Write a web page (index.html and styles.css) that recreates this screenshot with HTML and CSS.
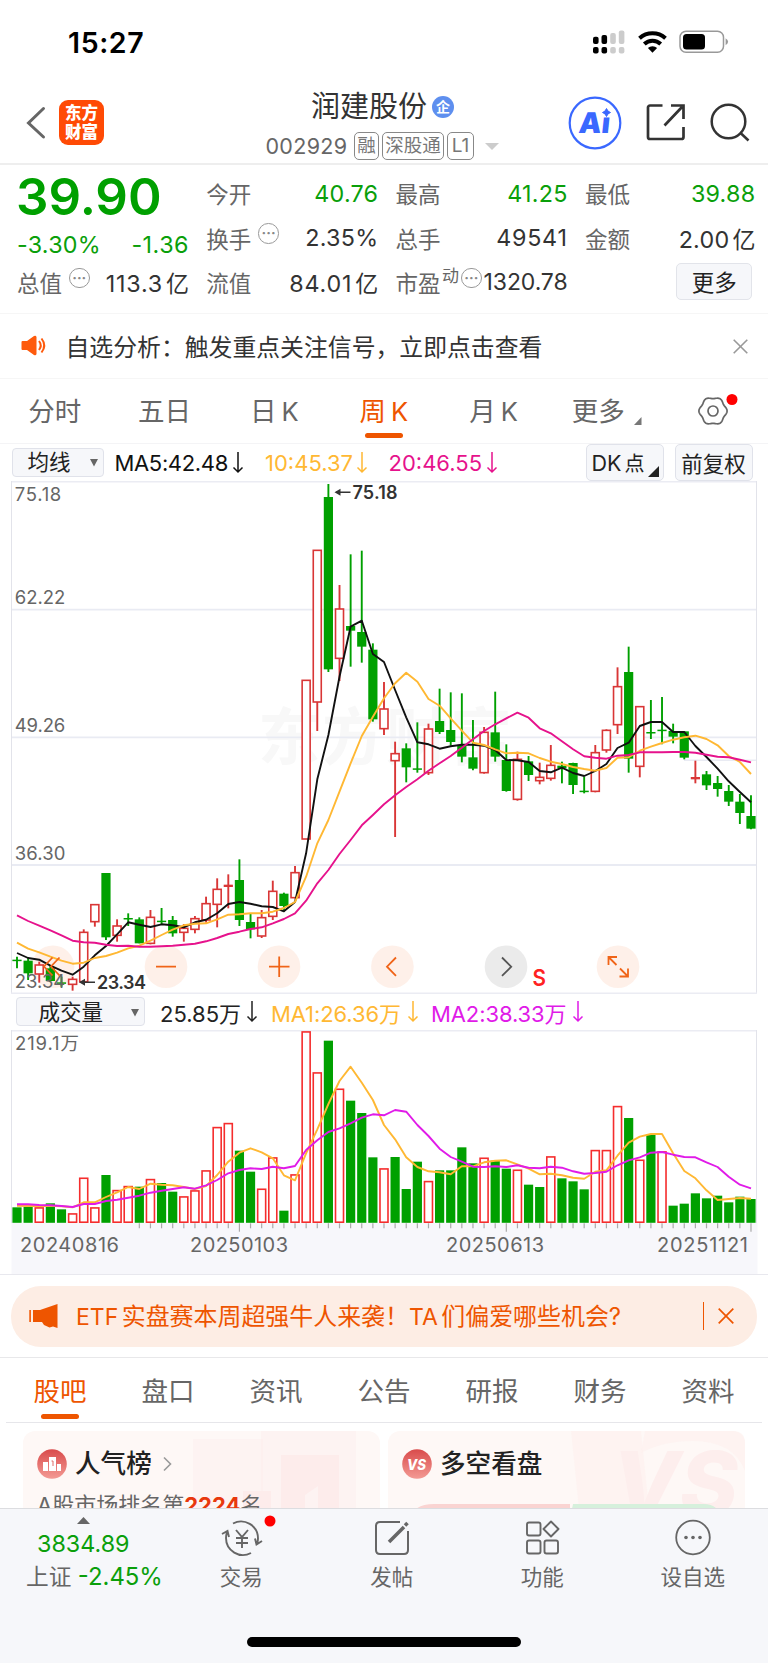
FILE: index.html
```html
<!DOCTYPE html>
<html lang="zh-CN">
<head>
<meta charset="utf-8">
<title>润建股份 002929</title>
<link rel="stylesheet" href="styles.css">
</head>
<body>
<div class="app">
  <div class="status">
    <span class="time">15:27</span>
    <svg class="status-icons" width="140" height="26" viewBox="590 28 140 26">
      <g fill="#000"><rect x="593" y="36.700" width="5.600" height="7.300" rx="2"/><rect x="601.500" y="35" width="5.600" height="9" rx="2"/><rect x="593" y="47" width="5.600" height="6.500" rx="2"/><rect x="601.500" y="47" width="5.600" height="6.500" rx="2"/></g>
      <g fill="#ccc"><rect x="610.200" y="33" width="5.600" height="11" rx="2"/><rect x="618.800" y="30.500" width="5.600" height="13.500" rx="2"/><rect x="610.200" y="47" width="5.600" height="6.500" rx="2"/><rect x="618.800" y="47" width="5.600" height="6.500" rx="2"/></g>
      <g fill="none" stroke="#000" stroke-width="4"><path d="M639.500 38.300a19.500 19.500 0 0 1 26 0"/><path d="M644.300 44a12 12 0 0 1 16.400 0"/></g>
      <path d="M652.500 52.800l-4.600-4.700a6.600 6.600 0 0 1 9.200 0z"/>
      <rect x="680" y="31.200" width="43.500" height="21" rx="6" fill="#fff" stroke="#999" stroke-width="1.500"/>
      <rect x="683" y="34" width="22" height="15.500" rx="3.500"/><path d="M725.600 38.200q5 3.500 0 7z" fill="#999"/>
    </svg>
  </div>

  <header class="head">
    <svg class="back" width="20" height="34" viewBox="0 0 20 34"><path d="M17.500 2.500L2.500 17l15 14" fill="none" stroke="#666" stroke-width="3" stroke-linecap="round"/></svg>
    <div class="logo"><span>东方</span><span>财富</span></div>
    <div class="title">
      <div class="name">润建股份<i class="qi">企</i></div>
      <div class="code"><span class="num">002929</span><span class="tag t1">融</span><span class="tag t3">深股通</span><span class="tag t2">L1</span><i class="caret"></i></div>
    </div>
    <svg class="ai" width="54" height="54" viewBox="0 0 54 54"><circle cx="27" cy="27" r="25.300" fill="#fff" stroke="#3a68ff" stroke-width="2.200"/><text x="14" y="37.300" class="ai-text" transform="skewX(-6)">Ai</text><path d="M32 10h11v10.500H32z" fill="#fff"/><path d="M38.500 12.500q1 3.200 4 4-3 .8-4 4-1-3.200-4-4 3-.8 4-4z" fill="#3a68ff" stroke="#3a68ff"/></svg>
    <svg class="share" width="40" height="40" viewBox="0 0 40 40" fill="none" stroke="#333" stroke-width="2.700"><path d="M16.500 2.500H4a2 2 0 0 0-2 2V34a2 2 0 0 0 2 2h31.500a2 2 0 0 0 2-2V24M18.500 22.500L36 4M25 2.500h12.500V16"/></svg>
    <svg class="search" width="40" height="40" viewBox="0 0 40 40" fill="none" stroke="#333" stroke-width="2.500"><circle cx="18.500" cy="18.500" r="16.800"/><path d="M30 29.500l8.500 8"/></svg>
  </header>

  <section class="quote">
    <div class="col first">
      <div class="price">39.90</div>
      <div class="cell chg"><b class="g">-3.30%</b><b class="g">-1.36</b></div>
      <div class="cell r3"><span>总值</span><i class="dots">···</i><b>113.3<em>亿</em></b></div>
    </div>
    <div class="col">
      <div class="cell"><span>今开</span><b class="g">40.76</b></div>
      <div class="cell"><span>换手</span><i class="dots">···</i><b>2.35%</b></div>
      <div class="cell r3"><span>流值</span><b>84.01<em>亿</em></b></div>
    </div>
    <div class="col">
      <div class="cell"><span>最高</span><b class="g">41.25</b></div>
      <div class="cell"><span>总手</span><b class="five">49541</b></div>
      <div class="cell pe"><span>市盈</span><sup>动</sup><i class="dots">···</i><b>1320.78</b></div>
    </div>
    <div class="col last">
      <div class="cell"><span>最低</span><b class="g">39.88</b></div>
      <div class="cell"><span>金额</span><b>2.00<em>亿</em></b></div>
      <div class="cell"><button class="more">更多</button></div>
    </div>
  </section>

  <section class="notice">
    <svg width="26" height="22" viewBox="0 0 26 22"><path d="M1.500 6h4.500L13 1q2-1 2.500 1v17q-.5 2-2.500 1L6 15H1.500Q.5 15 .5 14V7q0-1 1-1z" fill="#fe5a0c"/><path d="M18 6q3.500 4.500 0 9M20.500 3.500q5.500 7 0 14" fill="none" stroke="#fe5a0c" stroke-width="2"/></svg>
    <span class="msg">自选分析：触发重点关注信号，立即点击查看</span>
    <svg width="15" height="15" viewBox="0 0 15 15"><path d="M.7.7l13.600 13.600M14.300.7L.7 14.300" stroke="#999" stroke-width="1.600"/></svg>
  </section>

  <nav class="ktabs">
    <span>分时</span><span>五日</span><span class="k">日<i>K</i></span><span class="k on">周<i>K</i></span><span class="k">月<i>K</i></span><span class="mo">更多<svg width="8" height="8"><path d="M7.500 0v8H0z" fill="#777"/></svg></span>
    <span class="gear"><svg width="40" height="34" viewBox="692 394 40 34"><path id="gear" fill="none" stroke="#666" stroke-width="1.700"/><circle cx="713" cy="411" r="5" fill="none" stroke="#666" stroke-width="1.700"/><circle cx="732" cy="399.500" r="5.500" fill="#f00"/></svg></span>
  </nav>

  <div class="ind ma">
    <span class="sel s1">均线<svg width="8" height="8"><path d="M0 0h8L4 7.500z" fill="#666"/></svg></span>
    <span class="v" id="ma5">MA5:42.48<svg class="dn" viewBox="0 0 10 21"><path d="M5 0v20M.5 15.500L5 20l4.500-4.500"/></svg></span>
    <span class="v" id="ma10">10:45.37<svg class="dn" viewBox="0 0 10 21"><path d="M5 0v20M.5 15.500L5 20l4.500-4.500"/></svg></span>
    <span class="v" id="ma20">20:46.55<svg class="dn" viewBox="0 0 10 21"><path d="M5 0v20M.5 15.500L5 20l4.500-4.500"/></svg></span>
    <span class="btn dk">DK<i>点</i><svg width="11" height="11"><path d="M11 0v11H0z" fill="#222"/></svg></span>
    <span class="btn fq">前复权</span>
  </div>
  <svg class="kchart" id="kchart" width="768" height="513" viewBox="0 481 768 513"></svg>

  <div class="ind vol">
    <span class="sel s2">成交量<svg width="8" height="8"><path d="M0 0h8L4 7.500z" fill="#666"/></svg></span>
    <span class="v" id="v0">25.85万<svg class="dn" viewBox="0 0 10 21"><path d="M5 0v20M.5 15.500L5 20l4.500-4.500"/></svg></span>
    <span class="v" id="v1">MA1:26.36万<svg class="dn" viewBox="0 0 10 21"><path d="M5 0v20M.5 15.500L5 20l4.500-4.500"/></svg></span>
    <span class="v" id="v2">MA2:38.33万<svg class="dn" viewBox="0 0 10 21"><path d="M5 0v20M.5 15.500L5 20l4.500-4.500"/></svg></span>
  </div>
  <svg class="vchart" id="vchart" width="768" height="244" viewBox="0 1030 768 244"></svg>

  <section class="promo">
    <div class="pill">
      <svg width="30" height="26" viewBox="0 0 30 26" fill="#ee5500"><path d="M.3 7h1.600v12H.3zM4 7h7L28.500 1v24L24 23.500l-3.500 1L15 22l-2-3H4z"/></svg>
      <span class="ptext"><i>ETF</i>实盘赛本周超强牛人来袭！<i>TA</i>们偏爱哪些机会?</span>
      <i class="bar"></i>
      <svg width="16" height="16" viewBox="0 0 16 16"><path d="M.7.7l14.600 14.600M15.300.7L.7 15.300" stroke="#ee5500" stroke-width="1.700"/></svg>
    </div>
  </section>

  <nav class="tabs"><span class="on">股吧</span><span>盘口</span><span>资讯</span><span>公告</span><span>研报</span><span>财务</span><span>资料</span></nav>

  <section class="cards">
    <div class="card">
      <svg class="art" width="357" height="78" viewBox="0 0 357 78"><g fill="#fdeceb"><path d="M170 8h70v60h-30v10h-40z" opacity=".35"/><path d="M238 0h95v78h-95z" opacity=".35"/><path d="M220 60h28v18h-28z"/><path d="M258 24h58v54h-21V55l-13 9v14h-24z"/></g></svg>
      <div class="ctitle"><svg width="30" height="30" viewBox="0 0 30 30"><circle cx="15" cy="15" r="14.800" fill="url(#rg)"/><path d="M6 13h5v9H6zM12 8h7v14h-7zM20 15h4v7h-4z" fill="#fff"/><path d="M14.500 12h1.500v5" fill="none" stroke="#e06a66"/></svg><b>人气榜</b><svg width="9" height="16" viewBox="0 0 9 16"><path d="M1 1.500l6.500 6.500L1 14.500" fill="none" stroke="#999" stroke-width="1.600"/></svg></div>
      <div class="rank">A股市场排名第<b>2224</b>名</div>
    </div>
    <div class="card">
      <svg class="art" width="357" height="78" viewBox="0 0 357 78"><path d="M183 0h70l8 78h-70z" fill="#fef0ef" opacity=".6"/><path d="M257 0h88q12 0 12 12v28q-12-30-52-30-30 0-52 12z" fill="#fef0ef" opacity=".6"/><text x="224" y="84" class="vsbg">VS</text><path d="M28 78q6-5 18-5h136v5z" fill="#fad4d2"/><path d="M185 73h131q8 0 13 5H184z" fill="#d6f0dc"/></svg>
      <div class="ctitle"><svg width="30" height="30" viewBox="0 0 30 30"><defs><linearGradient id="rg" x2="0" y2="1"><stop stop-color="#d94b4b"/><stop offset="1" stop-color="#f39a94"/></linearGradient></defs><circle cx="15" cy="15" r="14.800" fill="url(#rg)"/><text x="5" y="21" class="vs" textLength="19" lengthAdjust="spacingAndGlyphs">VS</text></svg><b>多空看盘</b></div>
    </div>
  </section>

  <footer class="dock">
    <div class="index"><svg width="13" height="7"><path d="M0 7h13L6.500 0z" fill="#666"/></svg><b>3834.89</b><div>上证 <em>-2.45%</em></div></div>
    <div class="item"><svg width="56" height="44" viewBox="213 1515 56 44" fill="none" stroke="#666" stroke-width="1.900"><path d="M233 1523.500a17 17 0 0 1 25 15c0 2-.4 3.500-1 5.500M262 1541l-5.500 3.500-1.500-6M251 1553a17 17 0 0 1-25-15c0-2 .4-4 1-6M222 1534l5.500-3 1.500 6M236 1530l6 7 6-7M242 1537v11M236 1538h12M236 1543h12"/><circle cx="270" cy="1521" r="5.500" fill="red" stroke="none"/></svg><span>交易</span></div>
    <div class="item"><svg width="44" height="44" viewBox="370 1515 44 44" fill="none" stroke="#666" stroke-width="2"><path d="M400 1522h-20q-4 0-4 4v24q0 4 4 4h24q4 0 4-4v-19"/><path d="M389 1542l15-15" stroke-width="3.600"/><path d="M405 1525.500l2.500-2.500" stroke-width="3.600"/></svg><span>发帖</span></div>
    <div class="item"><svg width="44" height="44" viewBox="520 1515 44 44" fill="none" stroke="#666" stroke-width="1.900"><rect x="527" y="1522.500" width="13.500" height="13" rx="2"/><rect x="527" y="1540.500" width="13.500" height="13" rx="2"/><rect x="544.500" y="1540.500" width="13.500" height="13" rx="2"/><path d="M551 1521.500l7.500 7.500-7.500 7.500-7.500-7.500z" stroke-linejoin="round"/></svg><span>功能</span></div>
    <div class="item"><svg width="44" height="44" viewBox="671 1515 44 44"><circle cx="693" cy="1537.500" r="16.800" fill="none" stroke="#666" stroke-width="1.800"/><g fill="#666"><circle cx="686" cy="1537.500" r="1.800"/><circle cx="693" cy="1537.500" r="1.800"/><circle cx="700" cy="1537.500" r="1.800"/></g></svg><span>设自选</span></div>
    <i class="home"></i>
  </footer>
</div>
<script src="chart.js"></script>
</body>
</html>
```
FILE: styles.css
```css
* { box-sizing: border-box; }
body { margin: 0; background: #fff; color: #333; font-family: Inter, "Noto Sans CJK SC", sans-serif; }
i, em { font-style: normal; }
b { font-weight: 400; }
svg { display: block; flex: none; overflow: visible; }
.app { width: 768px; height: 1663px; overflow: hidden; display: flex; flex-direction: column; }
.app > * { flex: none; }

.status { height: 84px; display: flex; justify-content: space-between; padding: 28px 38px 0 68px; }
.time { font-size: 28.500px; font-weight: 600; line-height: 29px; color: #000; letter-spacing: .6px; }

.head { height: 81px; border-bottom: 2px solid #eee; display: flex; align-items: flex-start; padding: 1px 0 0 26px; }
.back { margin-top: 21px; }
.logo { width: 45px; height: 45px; margin: 15px 0 0 13px; border-radius: 9px; background: #ff4a05; color: #fff; font-size: 16.500px; font-weight: 900; line-height: 18.500px; display: flex; flex-direction: column; align-items: center; justify-content: center; }
.title { width: 371px; margin-left: 93px; display: flex; flex-direction: column; align-items: center; }
.name { font-size: 29px; line-height: 40px; height: 40px; margin-top: 2px; display: flex; align-items: center; padding-left: 26px; margin-left: -26px; }
.qi { width: 22px; height: 22px; border-radius: 11px; background: #5e8fef; color: #fff; font-size: 14px; font-weight: 700; line-height: 21px; text-align: center; margin-left: 5px; }
.code { display: flex; align-items: center; height: 38px; margin-top: 0; color: #666; width: 234px; }
.num { font-size: 21.500px; letter-spacing: .3px; width: 88.500px; }
.tag { height: 28px; border: 1.500px solid #888; border-radius: 5px; font-size: 18.500px; line-height: 25px; text-align: center; margin-right: 3px; color: #777; }
.t1 { width: 25px; } .t3 { width: 62px; } .t2 { width: 27px; font-size: 19px; }
.caret { border: 7px solid transparent; border-top-color: #ccc; border-bottom: 0; margin-left: 8px; }
.ai { margin: 10.500px 0 0 0; }
.ai-text { font: 900 28.500px Inter, sans-serif; fill: #3a68ff; }
.share { margin: 18px 0 0 24px; }
.search { margin: 18px 0 0 24px; }

.quote { height: 149px; border-bottom: 1.500px solid #f6f6f6; padding: 6px 12px 0 17px; display: flex; gap: 17.300px; }
.col { width: 172px; }
.last { width: 170.500px; }
.cell { height: 44.500px; display: flex; align-items: center; font-size: 22.500px; color: #666; white-space: nowrap; }
.cell b { margin-left: auto; color: #333; font-size: 23.300px; letter-spacing: .25px; }
.cell.r3 b { letter-spacing: .8px; }
.cell .five { letter-spacing: .7px; }
.cell em { margin-left: 3px; font-size: 23px; letter-spacing: 0; }
.cell b.g, .g { color: #0a9f0a; }
.price { color: #00a000; font-size: 51px; line-height: 52px; font-weight: 600; height: 50px; margin-left: -1px; }
.chg { height: 39px; padding-top: 8px; }
.cell.chg b { margin-left: 0; } .cell.chg b + b { margin-left: auto; letter-spacing: .5px; }
.dots { width: 20.500px; height: 20.500px; border: 1.500px solid #999; border-radius: 50%; margin: -9px 0 0 7px; font-size: 14px; line-height: 17px; color: #888; font-weight: 700; display: flex; justify-content: center; }
.pe sup { font-size: 17px; line-height: 20px; margin: -12px 0 0 1.500px; } .pe .dots { margin-left: 2px; }
.cell.pe b { letter-spacing: -.1px; font-size: 23px; }
.more { width: 75.500px; height: 36.500px; border: 1.500px solid #e2e4ea; border-radius: 5px; background: #f6f7fa; font: 22.500px/30px "Noto Sans CJK SC", sans-serif; color: #222; padding: 0; margin: -2px 0 0 91.500px; }

.notice { height: 65px; border-bottom: 1.500px solid #f6f6f6; display: flex; align-items: center; padding: 0 20px 0 21px; }
.msg { flex: 1; font-size: 23.850px; margin: -2px 0 0 18.500px; white-space: nowrap; }

.ktabs { height: 65px; border-bottom: 1.500px solid #f4f4f6; display: flex; font-size: 26.500px; line-height: 65px; color: #666; }
.ktabs > span { width: 109.700px; flex: none; text-align: center; position: relative; }
.ktabs i { margin-left: 5px; font-size: 25.500px; }
.ktabs .on, .tabs .on { color: #ee5500; }
.ktabs .on::after, .tabs .on::after { content: ""; position: absolute; left: 50%; width: 38px; margin-left: -19px; height: 5.500px; border-radius: 3px; background: #ee5500; bottom: 5px; }
.ktabs .mo { padding-right: 10px; }
.mo svg { position: absolute; right: 16px; bottom: 18px; }
.gear svg { margin: 15px 0 0 34px; }

.ind { display: flex; align-items: center; font-size: 22px; white-space: nowrap; color: #222; }
.ma { height: 37px; padding-left: 11.500px; }
.vol { height: 36px; padding: 0 0 1px 16px; }
.sel { height: 29.500px; border: 1.500px solid #e0e2ea; border-radius: 4px; background: #f6f7fa; display: flex; align-items: center; justify-content: space-between; font-size: 21.500px; line-height: 24px; color: #222; padding-bottom: 2px; }
.s1 { width: 92.500px; padding-left: 15px; padding-right: 5px; } .s2 { width: 129px; padding: 0 5px 0 21.500px; }
.sel svg { margin-top: 2px; }
.v { display: flex; align-items: center; justify-content: space-between; flex: none; }
.dn { width: 10px; height: 21px; fill: none; stroke: currentColor; stroke-width: 1.500; }
#ma5 { width: 128px; margin-left: 10.500px; color: #111; letter-spacing: -.35px; }
#ma10 { width: 102px; margin-left: 22.500px; color: #ffb833; }
#ma20 { width: 108px; margin-left: 21.500px; color: #e6128c; }
#v0 { width: 97px; margin-left: 15px; } #v1 { width: 147px; margin-left: 14px; color: #ffb833; letter-spacing: -.1px; } #v2 { width: 152px; margin-left: 13px; color: #e01be8; letter-spacing: -.1px; }
.btn { height: 37px; width: 78px; border: 1.500px solid #e0e2ea; border-radius: 5px; background: #f6f7fa; display: flex; align-items: center; justify-content: center; font-size: 21.500px; position: relative; }
.dk { margin-left: 89px; padding-right: 13px; } .dk i { margin-left: 3px; font-size: 20px; } .dk svg { position: absolute; right: 4px; bottom: 3px; }
.fq { margin-left: 11px; }

.kchart text, .vchart text { font-family: Inter, "Noto Sans CJK SC", sans-serif; font-size: 18.500px; fill: #666; }
.kchart text.mark { fill: #333; font-weight: 600; font-size: 18px; }
.kchart text.water { font-size: 62px; font-weight: 700; fill: #f8f8f8; }
.kchart text.sig { fill: #f22; font-weight: 600; font-size: 23px; }
.vchart text.date { font-size: 20px; }
.vchart, .kchart { overflow: hidden; }

.promo { height: 84px; border-top: 1.500px solid #e8e8ee; border-bottom: 1.500px solid #e8e8ea; padding: 10.500px 11px 0; }
.pill { height: 61px; border-radius: 30px; background: #fdede4; display: flex; align-items: center; padding: 0 23px 0 18px; color: #ee5500; }
.ptext { font-size: 23.950px; flex: 1; margin: -3px 0 0 17px; white-space: nowrap; }
.ptext i { margin-right: 3.500px; font-size: 23px; }
.bar { width: 1.500px; height: 28px; background: #ee5500; margin-right: 14px; }

.tabs { height: 65px; margin: 0 6px; border-bottom: 1.500px solid #e6e6ea; display: flex; font-size: 26.500px; line-height: 66px; color: #666; }
.tabs span { flex: 1; text-align: center; position: relative; }
.tabs .on::after { bottom: 3px; }

.cards { height: 85px; overflow: hidden; display: flex; gap: 8px; padding: 8px 23px 0; }
.card { width: 357px; height: 120px; border-radius: 12px; background: #fef8f6; position: relative; padding: 17px 0 0 14px; }
.art { position: absolute; left: 0; top: 0; }
.ctitle { display: flex; align-items: center; height: 32px; position: relative; }
.ctitle b { font-size: 25.600px; line-height: 32px; font-weight: 500; color: #222; margin: -1px 11px 0 8px; }
.rank { position: relative; margin-top: 10px; font-size: 22px; line-height: 30px; color: #666; }
.rank b { color: #e8380d; font-weight: 700; }
.vs { font: italic 800 14px Inter, sans-serif; fill: #fff; }
.vsbg { font: italic 800 88px Inter, sans-serif; fill: #fdeeed; }

.dock { height: 155px; background: #f6f7fa; border-top: 1.500px solid #dcdde0; display: flex; position: relative; }
.index { width: 166px; font-size: 22.700px; color: #666; white-space: nowrap; }
.index svg { margin: 8px 0 0 77px; } .index b { display: block; color: #0a9f0a; font-size: 23.300px; line-height: 30px; margin: 5px 0 0 37px; } .index div { line-height: 36px; margin-left: 26px; } .index em { color: #0a9f0a; font-size: 23.900px; }
.item { width: 150.500px; display: flex; flex-direction: column; align-items: center; font-size: 21.500px; color: #666; padding-top: 6px; }
.item span { line-height: 34px; margin-top: 1px; }
.home { position: absolute; left: 247px; bottom: 16px; width: 274px; height: 10px; border-radius: 5px; background: #000; }
```
FILE: chart.js
```js
// Geometry of the weekly chart: evenly pitched bars, y values in page units.
const X = i => 17 + i * 11.121;
const G = '#00a000', R = '#d93636';
const at = (base, list) => list.map(v => base + v / 3);

// direction, high, open/close top, open/close bottom, low
const seg = (base, rows) => rows.map(r => [r[0], ...r.slice(1).map(v => base + v / 3)]);
const candles = [
  ...seg(800, [
    ['g',470,479,481,505],['g',472,482,520,540],['r',485,495,522,548],['g',498,505,543,545],['g',530,547,551,560],
    ['r',530,538,553,572],['r',388,397,545,545],['r',314,314,365,380],['g',219,219,412,420],['r',358,378,406,425],
    ['g',340,354,356,378],['g',352,358,430,430],['r',330,352,430,433],['g',324,362,364,372],['g',348,360,400,410],
    ['r',372,385,397,425],['r',348,356,388,400],['r',290,311,360,368],['r',235,268,313,382],['r',223,254,261,325],
    ['g',178,240,360,378],['g',340,366,388,415]]),
  ...seg(600, [
    ['r',930,953,1008,1014],['r',842,874,949,960],['g',878,881,918,935],['r',798,818,893,895],['r',241,241,717,717],
    ['r',-149,-149,306,393],['g',-348,-309,208,216],['r',-45,27,175,243],['g',-137,78,92,200],['g',-148,96,140,188],
    ['g',130,149,358,365],['r',246,327,386,405],['r',425,461,482,711],['g',430,445,502,547],['g',367,505,507,518],
    ['r',371,387,518,525],['g',266,363,396,402],['g',277,390,426,437],['g',280,435,470,487],['g',360,472,506,511],
    ['r',381,397,518,521],['g',275,397,470,485],['g',433,480,573,575]]),
  ...seg(620, [
    ['r',395,418,538,542],['g',408,424,465,483],['r',428,472,482,493],['r',375,436,475,482],['g',425,437,445,490],
    ['g',428,429,495,522],['g',470,512,514,520],['r',375,398,514,517],['r',328,331,390,398],['r',142,200,314,342],
    ['g',80,156,416,458],['r',260,260,439,472],['g',240,336,338,357],['g',231,329,331,373],['g',311,333,350,370],
    ['g',334,334,413,418],['r',422,471,478,490],['g',453,463,496,510],['g',468,489,507,530],['g',495,513,545,558],
    ['g',522,545,579,612],['g',526,588,626,628]])
];

const ma5 = [...at(800,[459,474,479,497,512,524,500,466,438,403,367,374,381,373,376,382,367,359,340,312,306,311]),
  ...at(600,[919,921,934,906,760,538,405,230,80,62,162,186,270,352,427,433,446,439,434,434,437,450,480]),
  ...at(620,[421,426,453,457,443,459,468,453,432,384,368,318,306,306,336,336,378,411,446,484,516,547])];
const ma10 = [...at(800,[428,446,457,470,482,491,488,474,468,458,445,437,422,405,389,376,371,370,358,344,343,340]),
  ...at(600,[940,935,924,906,830,730,660,575,490,408,350,295,250,218,245,297,317,355,392,428,435,448,460]),
  ...at(620,[398,400,414,425,432,441,447,452,444,413,412,392,380,369,359,352,347,357,376,408,426,462])];
const ma20 = [...at(800,[346,363,377,391,406,422,427,428,434,438,437,440,440,439,437,434,431,424,414,402,395,387]),
  ...at(600,[982,970,957,940,902,850,810,762,720,676,645,613,586,561,538,512,490,468,443,418,393,373,355]),
  ...at(620,[278,293,325,340,364,388,409,413,416,407,405,397,397,397,396,396,398,404,410,412,419,427])];

const line = (ys, color) => `<polyline fill="none" stroke="${color}" stroke-width="1.9" stroke-linejoin="round" points="${ys.map((y, i) => X(i).toFixed(1) + ',' + y.toFixed(1)).join(' ')}"/>`;
const rule = (x1, y1, x2, y2, c = '#ebecf3', w = 1.5) => `<path d="M${x1} ${y1}L${x2} ${y2}" stroke="${c}" stroke-width="${w}" fill="none"/>`;

function candle([dir, hi, top, bot, lo], i) {
  const x = X(i), c = dir === 'g' ? G : R;
  if (dir === 'g' || bot - top < 3) {
    const h = Math.max(bot - top, 1.5);
    return rule(x, hi, x, lo, c, 1.9) + `<rect x="${x - 4.6}" y="${top}" width="9.2" height="${h}" fill="${c}"/>`;
  }
  return rule(x, hi, x, top, c, 1.9) + rule(x, bot, x, lo, c, 1.9) + `<rect x="${x - 4}" y="${top}" width="8" height="${bot - top}" fill="#fff" stroke="${c}" stroke-width="1.6"/>`;
}

let k = '<text class="water" x="258" y="760" textLength="254">东方财富</text>';
k += rule(11, 481.7, 757, 481.7) + rule(11.5, 481, 11.5, 994, '#e2e3ea', 1) + rule(756.5, 481, 756.5, 994, '#e2e3ea', 1) + rule(11, 993.3, 757, 993.3);
[609.7, 737.3, 865].forEach(y => { k += rule(12, y, 756, y, '#e9ebf3', 1.8); });
k += rule(684, 760.3, 756, 760.3, '#e9ebf3', 1.5);
[53, 166, 279, 392.4, 506, 618].forEach((x, i) => {
  k += `<circle cx="${x}" cy="966.700" r="21.300" fill="${i === 4 ? '#dedede' : '#fee7dc'}" opacity=".62"/>`;
});
k += candles.map(candle).join('');
k += line(ma5, '#111') + line(ma10, '#ffb833') + line(ma20, '#e6128c');
[[75.18, 501], [62.22, 603.5], [49.26, 731.5], [36.30, 859.5], [23.34, 988]].forEach(([v, y]) => {
  k += `<text x="14.800" y="${y}" textLength="${v > 75 ? 46.5 : 50.5}">${v.toFixed(2)}</text>`;
});
k += '<g fill="none" stroke="#333" stroke-width="1.5"><path d="M336 492.300h14.500M80.500 982.300h14.500"/></g><path d="M334.500 492.300l6-3.500v7zM79 982.300l6-3.500v7z" fill="#333"/>';
k += '<text class="mark" x="352.500" y="499" textLength="45">75.18</text><text class="mark" x="97" y="989" textLength="49">23.34</text>';
k += `<g fill="none" stroke="#f06418" stroke-width="1.8">
<path d="M52.500 957.500l-8.500 9 8.500 9M59.500 957.500l-8.500 9 8.500 9M156 966.700h20M269 966.700h20.500M279.200 956.500v20.500M396 957.500l-9 9.200 9 9.200"/>
<path d="M608.500 965v-8h8.500M609 957.500l7.500 7.500M628 968.500v8h-8.500M627.500 976l-7.500-7.500"/><path d="M502 957.500l9.200 9.200-9.200 9.200" stroke="#555"/></g>`;
k += '<text class="sig" x="532.500" y="985.500" textLength="13.500" lengthAdjust="spacingAndGlyphs">S</text>';
document.getElementById('kchart').innerHTML = k;

const dirs = 'ggrggrrrgrrgrggrrrrrggrrgrrrgrgggrgggrggggrggrggrgggrrrgrgrgggggggg';
const vols = [622,620,622,610,628,640,533,622,525,570,558,560,537,549,575,589,571,511,381,369,452,515,566,472,632,523,94,217,122,266,302,339,472,505,471,567,485,543,511,511,442,490,473,482,506,509,554,561,469,535,544,568,450,450,318,354,479,402,454,617,611,580,595,587,607,590,597];
const vma1 = [617,618,618,617,619,622,607,607,591,577,561,567,551,554,556,561,567,558,525,485,458,445,457,475,526,541,460,388,312,243,200,248,300,375,418,472,501,514,517,523,499,499,487,482,481,493,506,523,521,526,533,536,515,511,467,428,410,402,402,460,513,535,571,600,597,594,596];
const vma2 = [613,613,615,616,618,621,612,612,603,599,593,587,578,572,567,562,566,556,540,520,510,505,507,500,505,498,450,421,396,385,370,353,343,346,330,335,375,408,446,471,485,500,501,499,501,496,503,505,500,503,514,521,519,515,496,481,472,458,456,464,471,472,487,501,530,554,565];

let v = '<rect x="11.500" y="1223" width="746" height="51" fill="#f7f7fb"/>';
v += rule(11, 1030.7, 757, 1030.7) + rule(11.5, 1030, 11.5, 1223, '#e2e3ea', 1) + rule(756.5, 1030, 756.5, 1223, '#e2e3ea', 1);
v += '<text x="15" y="1049.500" textLength="64">219.1万</text>';
vols.forEach((t, i) => {
  const y = 1000 + t / 3, x = X(i), h = 1222.8 - y;
  v += dirs[i] === 'g' ? `<rect x="${x - 4.6}" y="${y}" width="9.200" height="${h}" fill="${G}"/>`
    : `<rect x="${x - 4}" y="${y + .6}" width="8" height="${h - 1.2}" fill="#fff" stroke="#f52d2d" stroke-width="1.600"/>`;
  if (i > 10) v += rule(x, 1223.3, x, [20, 44, 66].includes(i) ? 1231.7 : 1228.3, '#aaa', 1.2);
});
v += line(at(1000, vma1), '#ffb833') + line(at(1000, vma2), '#e01be8');
v += '<text class="date" x="20" y="1252" textLength="99">20240816</text><text class="date" x="190" y="1252" textLength="98">20250103</text><text class="date" x="446" y="1252" textLength="98">20250613</text><text class="date" x="657" y="1252" textLength="91">20251121</text>';
document.getElementById('vchart').innerHTML = v;

// Six-lobed settings outline.
let d = '';
for (let a = 0; a <= 360; a += 5) {
  const r = 13.2 + .9 * Math.cos(a * 6 * Math.PI / 180), t = a * Math.PI / 180;
  d += (a ? 'L' : 'M') + (713 + r * Math.cos(t)).toFixed(2) + ' ' + (411 + r * Math.sin(t)).toFixed(2);
}
document.getElementById('gear').setAttribute('d', d + 'Z');
```
